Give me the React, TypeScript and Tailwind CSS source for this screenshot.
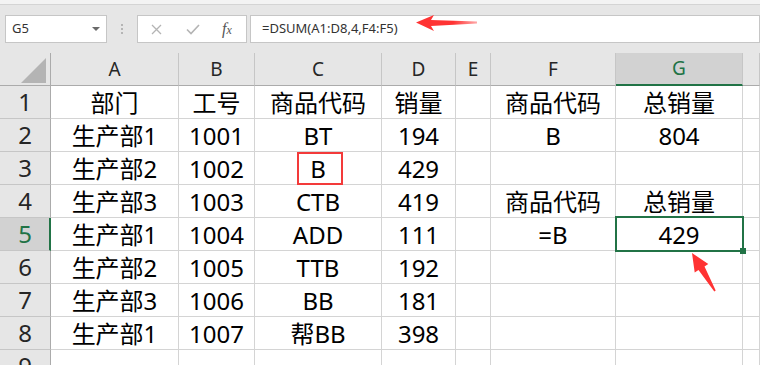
import { Fragment } from 'react'

const cols = ['A', 'B', 'C', 'D', 'E', 'F', 'G', '']

const rows: string[][] = [
  ['部门', '工号', '商品代码', '销量', '', '商品代码', '总销量', ''],
  ['生产部1', '1001', 'BT', '194', '', 'B', '804', ''],
  ['生产部2', '1002', 'B', '429', '', '', '', ''],
  ['生产部3', '1003', 'CTB', '419', '', '商品代码', '总销量', ''],
  ['生产部1', '1004', 'ADD', '111', '', '=B', '429', ''],
  ['生产部2', '1005', 'TTB', '192', '', '', '', ''],
  ['生产部3', '1006', 'BB', '181', '', '', '', ''],
  ['生产部1', '1007', '帮BB', '398', '', '', '', ''],
  ['', '', '', '', '', '', '', ''],
]

function FormulaBar() {
  return (
    <div className="h-[48px] bg-[#e6e6e6] pt-[10px] flex items-start">
      {/* name box */}
      <div className="ml-[5px] w-[102px] h-[28px] bg-white border border-[#c6c6c6] flex items-center justify-between pl-[6px] pr-[6px]">
        <span className="text-[13px] text-[#333]">G5</span>
        <svg width="8" height="5" viewBox="0 0 8 5">
          <path d="M0 0 L8 0 L4 4 Z" fill="#6a6a6a" />
        </svg>
      </div>
      {/* separator dots */}
      <div className="w-[30px] h-[28px] flex flex-col items-center justify-center gap-[2px]">
        <span className="w-[2px] h-[2px] bg-[#b5b5b5]" />
        <span className="w-[2px] h-[2px] bg-[#b5b5b5]" />
        <span className="w-[2px] h-[2px] bg-[#b5b5b5]" />
      </div>
      {/* cancel / enter / fx */}
      <div className="w-[110px] h-[28px] bg-white border border-[#c6c6c6] flex items-center">
        <svg className="ml-[13px]" width="11" height="11" viewBox="0 0 11 11">
          <path d="M1 1 L10 10 M10 1 L1 10" stroke="#b4b4b4" strokeWidth="1.3" fill="none" />
        </svg>
        <svg className="ml-[24px]" width="14" height="11" viewBox="0 0 14 11">
          <path d="M1 5.5 L5 9.5 L13 1" stroke="#b4b4b4" strokeWidth="1.6" fill="none" />
        </svg>
        <span className="ml-[22px] text-[16px] leading-none italic text-[#555] font-['Liberation_Serif',serif]">
          f<span className="text-[12px]">x</span>
        </span>
      </div>
      {/* formula input */}
      <div className="ml-[3px] flex-1 h-[28px] bg-white border border-[#c6c6c6] flex items-center pl-[11px]">
        <span className="text-[13px] text-[#333]">=DSUM(A1:D8,4,F4:F5)</span>
      </div>
    </div>
  )
}

function Sheet() {
  return (
    <div className="grid grid-cols-[51px_128px_76px_127px_74px_35px_125px_127px_1fr] auto-rows-[33px]">
      {/* corner */}
      <div className="bg-[#e6e6e6] border-r border-b border-[#ababab] relative">
        <svg className="absolute left-[21px] top-[5px]" width="26" height="25" viewBox="0 0 26 25">
          <path d="M0 25 L25 0 L25 25 Z" fill="#b4b4b4" />
        </svg>
      </div>
      {cols.map((c, i) => (
        <div
          key={c + i}
          className={
            c === 'G'
              ? 'bg-[#d2d2d2] border-r border-[#c6c6c6] border-b-2 border-b-[#217346] flex items-center justify-center text-[19px] text-[#217346]'
              : 'bg-[#e6e6e6] border-r border-[#c6c6c6] border-b border-b-[#ababab] flex items-center justify-center text-[19px] text-[#262626]'
          }
        >
          {c}
        </div>
      ))}
      {rows.map((r, ri) => (
        <Fragment key={ri}>
          <div
            className={
              ri === 4
                ? 'bg-[#d2d2d2] border-b border-[#c6c6c6] border-r-2 border-r-[#217346] flex items-center justify-center text-[24px] text-[#217346] pl-[1px]'
                : 'bg-[#e6e6e6] border-b border-[#c6c6c6] border-r border-r-[#ababab] flex items-center justify-center text-[24px] text-[#262626]'
            }
          >
            {ri + 1}
          </div>
          {r.map((v, ci) => (
            <div
              key={ci}
              className="relative border-r border-b border-[#d4d4d4] flex items-center justify-center pt-[2px] text-[24px] text-black whitespace-nowrap"
            >
              {v}
              {ri === 2 && ci === 2 && (
                <div className="absolute left-[42px] top-0 w-[46px] h-[33px] border-2 border-[#f33a3a]" />
              )}
              {ri === 4 && ci === 6 && (
                <>
                  <div className="absolute z-10 -left-[1px] -top-[2px] w-[129px] h-[36px] border-2 border-[#217346]" />
                  <div className="absolute z-10 left-[124px] top-[30px] w-[6px] h-[6px] bg-[#217346]" />
                </>
              )}
            </div>
          ))}
        </Fragment>
      ))}
    </div>
  )
}

export default function App() {
  return (
    <div className="w-[760px] h-[365px] overflow-hidden bg-white relative font-['Noto_Sans','Noto_Sans_CJK_SC',sans-serif]">
      <div className="h-[5px] bg-[#f3f3f3] border-b border-[#d4d4d4]" />
      <FormulaBar />
      <Sheet />

      {/* annotation arrows */}
      <svg className="absolute z-20 left-0 top-0 pointer-events-none" width="760" height="365" viewBox="0 0 760 365">
        <defs>
          <linearGradient id="tailFade" x1="416" y1="0" x2="478" y2="0" gradientUnits="userSpaceOnUse">
            <stop offset="0.6" stopColor="#ff3333" stopOpacity="1" />
            <stop offset="1" stopColor="#ff3333" stopOpacity="0.4" />
          </linearGradient>
        </defs>
        <polygon
          points="416,22.5 434,15 431,20 477,21.5 477,23.5 431,26 434,31"
          fill="url(#tailFade)"
        />
        <polygon
          points="692,253 708.3,264.1 704.5,266.5 715.7,290.6 714.3,291.4 698.5,270.1 694.7,272.5"
          fill="#ff3333"
        />
      </svg>
    </div>
  )
}
